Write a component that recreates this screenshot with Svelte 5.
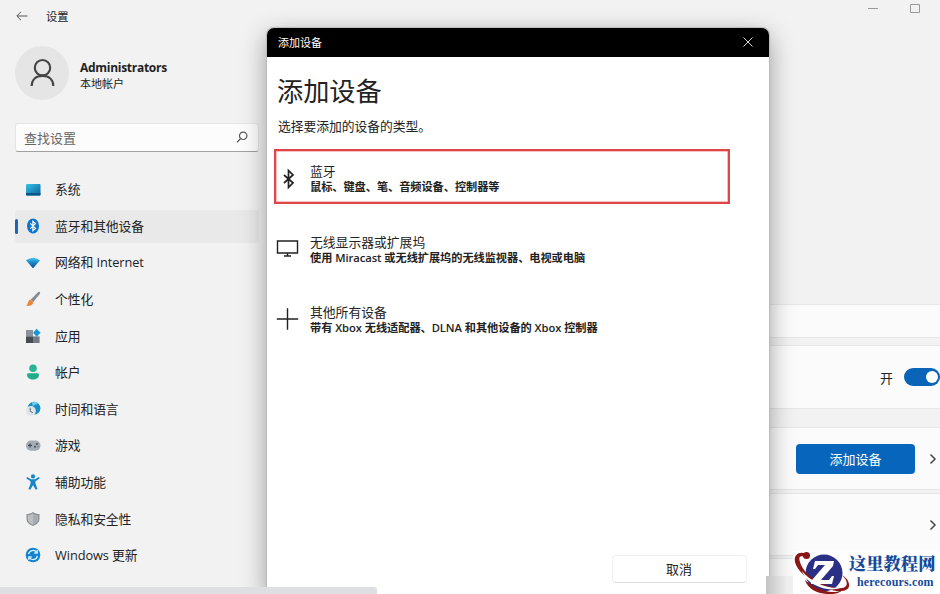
<script lang="ts">
    type NavItem = { icon: string; label: string };
    type Device = { icon: string; title: string; text: string };

    const nav: NavItem[] = [
        { icon: "system", label: "系统" },
        { icon: "bluetooth", label: "蓝牙和其他设备" },
        { icon: "network", label: "网络和 Internet" },
        { icon: "brush", label: "个性化" },
        { icon: "apps", label: "应用" },
        { icon: "account", label: "帐户" },
        { icon: "time", label: "时间和语言" },
        { icon: "gaming", label: "游戏" },
        { icon: "access", label: "辅助功能" },
        { icon: "privacy", label: "隐私和安全性" },
        { icon: "update", label: "Windows 更新" },
    ];

    const devices: Device[] = [
        { icon: "bluetooth", title: "蓝牙", text: "鼠标、键盘、笔、音频设备、控制器等" },
        {
            icon: "display",
            title: "无线显示器或扩展坞",
            text: "使用 Miracast 或无线扩展坞的无线监视器、电视或电脑",
        },
        {
            icon: "plus",
            title: "其他所有设备",
            text: "带有 Xbox 无线适配器、DLNA 和其他设备的 Xbox 控制器",
        },
    ];

    let selected = $state("bluetooth");
    let enabled = $state(true);
</script>

{#snippet navIcon(name: string)}
    <svg class="nav-icon" viewBox="0 0 16 16">
        {#if name === "system"}
            <defs>
                <linearGradient id="screen" x1="0" y1="0" x2="1" y2="1">
                    <stop offset="0" stop-color="#35c3e6" />
                    <stop offset="1" stop-color="#0b5f9c" />
                </linearGradient>
            </defs>
            <rect x="1" y="2" width="14.5" height="11.4" rx="1" fill="url(#screen)" />
            <path d="M1 11h14.5v1.4a1 1 0 0 1-1 1H2a1 1 0 0 1-1-1z" fill="#0b5685" />
        {:else if name === "bluetooth"}
            <ellipse cx="8" cy="8" rx="6" ry="7.4" fill="#0b74cf" />
            <path d="M5.3 5.4l5.2 5-2.6 2.3V3.3l2.6 2.3-5.2 5" fill="none" stroke="#fff" stroke-width="1.2" />
        {:else if name === "network"}
            <defs>
                <linearGradient id="wifi" x1="0" y1="0" x2="0" y2="1">
                    <stop offset="0" stop-color="#4cc8ef" />
                    <stop offset="0.45" stop-color="#1b8bcc" />
                    <stop offset="1" stop-color="#0c4f96" />
                </linearGradient>
            </defs>
            <path d="M1 5.2Q8 .2 15 5.2L8.6 12.800a.9.9 0 0 1-1.200 0z" fill="url(#wifi)" />
        {:else if name === "brush"}
            <path d="M14.7.9c.7.6.6 1.2.1 2L8.2 11 5.6 8.7 12.7 1.4c.7-.7 1.3-1 2-.5z" fill="#858b91" />
            <path d="M5.4 8.6L8.3 11c-.2 3-3.3 4.2-7 3.9 1.9-1.2 1.2-5.2 4.1-6.3z" fill="#e58a3c" />
        {:else if name === "apps"}
            <path d="M1 2h7v6.400H1z" fill="#8b9299" />
            <path d="M1 8.400h7V15H1z" fill="#454b51" />
            <path d="M8 8.400h6.600V15H8z" fill="#737a81" />
            <path d="M11.6.8l4 4-4 4-3.5-4z" fill="#1c94d6" />
        {:else if name === "account"}
            <circle cx="8" cy="4.2" r="3.8" fill="#27b593" />
            <path d="M2 10.6q0-1.4 1.4-1.4h9.2q1.4 0 1.4 1.4c0 3.4-2.6 5-6 5s-6-1.6-6-5z" fill="#20ac88" />
        {:else if name === "time"}
            <circle cx="9" cy="7.200" r="6.400" fill="#168fc7" />
            <path d="M7 1.2a6.4 6.4 0 0 1 6 .9c-1 2-4.1 1.6-5.3 3.5z" fill="#6dcdea" />
            <circle cx="5.8" cy="10" r="5" fill="#dfe5e9" />
            <path d="M5.2 6.8v3.5l2.6 1.3" fill="none" stroke="#5c6770" stroke-width="1" />
        {:else if name === "gaming"}
            <rect x="1" y="2.600" width="14.5" height="10.200" rx="5" fill="#a5acb3" />
            <path d="M3 7.4h4M5 5.4v4" stroke="#454e57" stroke-width="1.2" />
            <circle cx="12" cy="6" r="1" fill="#454e57" />
            <circle cx="10" cy="8.7" r="1" fill="#454e57" />
            <circle cx="13" cy="8.7" r=".7" fill="#6d7780" />
        {:else if name === "access"}
            <circle cx="8" cy="2.4" r="2.1" fill="#1686c9" />
            <path
                d="M2.2 2.9l3.9 2.3h3.8l3.9-2.3 1 1.3-4.3 3v2.6l2 5.2-1.7.7L8 11.3l-2.8 4.4-1.7-.7 2-5.2V7.2l-4.3-3z"
                fill="#1686c9"
            />
        {:else if name === "privacy"}
            <path d="M8 1c2 1.4 4 2 6.5 2v4.8c0 3.4-2.4 5.7-6.5 7.2-4.1-1.5-6.5-3.8-6.5-7.2V3C4 3 6 2.4 8 1z" fill="#898e93" />
            <path d="M8 2.4c1.6 1 3.3 1.6 5.3 1.700v3.800c0 2.500-1.800 4.400-5.300 5.800z" fill="#a8acb0" />
            <path d="M8 2.4C6.4 3.4 4.7 4 2.7 4.100v3.800c0 2.500 1.800 4.400 5.300 5.800z" fill="#bcbfc2" />
        {:else}
            <circle cx="8" cy="8" r="7.3" fill="#1382cf" />
            <path
                d="M3.6 7.2a4.5 4.5 0 0 1 8.2-1.7M12.4 8.8a4.5 4.5 0 0 1-8.2 1.7M12.2 3v3H9.3M3.8 13v-3h2.9"
                fill="none"
                stroke="#d9f1ff"
                stroke-width="1.3"
            />
        {/if}
    </svg>
{/snippet}

{#snippet deviceIcon(name: string)}
    <svg class="device-icon" viewBox="0 0 24 24">
        {#if name === "bluetooth"}
            <path d="M8 8l9 7.8-4.500 4.700v-17L17 8l-9 8" fill="none" stroke="#222" stroke-width="1.700" />
        {:else if name === "display"}
            <path d="M1.500 3h20v12H1.500zM11.500 15v3M8 18h7" fill="none" stroke="#222" stroke-width="1.400" />
        {:else}
            <path d="M.8 11h21.400M11.500.3v21.400" fill="none" stroke="#222" stroke-width="1.400" />
        {/if}
    </svg>
{/snippet}

{#snippet chevron()}
    <svg class="chevron" viewBox="0 0 8 12">
        <path d="M1.5 1.5L6 6l-4.5 4.5" fill="none" stroke="#484848" stroke-width="1.5" />
    </svg>
{/snippet}

<div class="window">
    <aside>
        <header>
            <svg class="back" viewBox="0 0 12 10">
                <path d="M11.5 5H1M5 .8L.8 5 5 9.2" fill="none" stroke="#555" />
            </svg>
            <span>设置</span>
        </header>

        <div class="profile">
            <div class="avatar">
                <svg viewBox="0 0 28 30">
                    <circle cx="14" cy="9.5" r="8" />
                    <path d="M2.8 28.500c0-7 4.700-10.500 11.200-10.500s11.200 3.500 11.200 10.500" />
                </svg>
            </div>
            <div class="who">
                <strong>Administrators</strong>
                <span>本地帐户</span>
            </div>
        </div>

        <div class="search">
            <span>查找设置</span>
            <svg viewBox="0 0 12 12">
                <circle cx="7.2" cy="4.8" r="3.7" />
                <path d="M4.6 7.5L1 11.3" />
            </svg>
        </div>

        <nav>
            {#each nav as item}
                <button class="nav-item" class:active={item.icon === selected} onclick={() => (selected = item.icon)}>
                    {@render navIcon(item.icon)}
                    <span>{item.label}</span>
                </button>
            {/each}
        </nav>
    </aside>

    <main>
        <div class="controls">
            <svg viewBox="0 0 10 10"><path d="M0 4.500h10" /></svg>
            <svg viewBox="0 0 10 10"><path d="M.5.5h9v8h-9z" /></svg>
        </div>
        <section class="card info"></section>
        <section class="card radio">
            <span>开</span>
            <button class="toggle" class:on={enabled} aria-label="蓝牙" onclick={() => (enabled = !enabled)}>
                <i></i>
            </button>
        </section>
        <section class="card add">
            <button class="primary">添加设备</button>
            {@render chevron()}
        </section>
        <section class="card more">
            {@render chevron()}
        </section>
        <section class="card rest"></section>
    </main>

    <div class="dialog">
        <div class="titlebar">
            <span>添加设备</span>
            <svg viewBox="0 0 10 10"><path d="M.5.5l9 9M9.5.5l-9 9" /></svg>
        </div>
        <div class="content">
            <h1>添加设备</h1>
            <p>选择要添加的设备的类型。</p>
            <div class="devices">
                {#each devices as device, i}
                    <div class="device" class:marked={i === 0}>
                        {@render deviceIcon(device.icon)}
                        <div>
                            <div class="device-title">{device.title}</div>
                            <div class="device-text">{device.text}</div>
                        </div>
                    </div>
                {/each}
            </div>
            <button class="cancel">取消</button>
        </div>
    </div>

    <div class="edge"></div>
    <div class="statusbar"></div>

    <div class="brand">
        <svg viewBox="0 0 58 43">
            <circle cx="31" cy="22" r="18.5" fill="#2b3087" />
            <path d="M12 29c7 6 17 11 26 12 6 .6 11-1 13-4-3 5-9 6.500-17 6-11-1-19-5-22-14z" fill="#8c1515" />
            <path
                d="M14 3C5-1-1 5 3 14c6 12 24 24 41 26 8 1 13-2 12-7-1-5-4-7-7-9 4 4 6 8 4 11-3 4-14 2-23-2C18 28 9 19 7 11 5 5 8 4 13 7z"
                fill="#8c1515"
            />
            <circle cx="13.5" cy="4.5" r="3.5" fill="#8c1515" />
            <path d="M9 20c8 10 24 18 38 17-8 3-17 1-25-3-6-3-11-8-13-14z" fill="#fff" />
            <path d="M22 10h19l-1 5-12 14h8l3-4h2l-2 8H18l1-4 13-15h-7l-3 4h-2z" fill="#fff" />
        </svg>
        <div class="brand-text">
            <b>这里教程网</b>
            <small>herecours.com</small>
        </div>
    </div>
</div>

<style>
    :global(body) {
        font-family: "Open Sans", "Noto Sans CJK SC", sans-serif;
        font-size: 13px;
        color: #222;
    }

    button {
        font: inherit;
        color: inherit;
        border: 0;
        padding: 0;
        background: none;
    }

    svg {
        display: block;
        flex: none;
    }

    .window {
        position: relative;
        display: grid;
        grid-template-columns: 267px 1fr;
        width: 940px;
        height: 594px;
        overflow: hidden;
        background: #f2f2f2;
    }

    aside {
        padding-left: 15px;
    }

    header {
        display: flex;
        align-items: center;
        gap: 18px;
        height: 32px;
        font-size: 11.3px;
    }

    .back {
        width: 12px;
        height: 10px;
        margin-left: 1px;
    }

    .profile {
        display: flex;
        align-items: center;
        gap: 11px;
        height: 54px;
        margin-top: 14px;
    }

    .avatar {
        display: grid;
        place-items: center;
        width: 54px;
        height: 54px;
        border-radius: 50%;
        background: #e5e5e5;
    }

    .avatar svg {
        width: 27px;
        height: 30px;
        fill: none;
        stroke: #444;
        stroke-width: 2.2;
    }

    .who {
        display: flex;
        flex-direction: column;
        padding-top: 3px;
        font-size: 11px;
        line-height: 15px;
    }

    .who strong {
        font-size: 12px;
        line-height: 17px;
        letter-spacing: -0.28px;
    }

    .search {
        display: flex;
        align-items: center;
        justify-content: space-between;
        box-sizing: border-box;
        width: 244px;
        height: 29px;
        margin-top: 23px;
        padding: 0 10px 1px 8px;
        border: 1px solid #e5e5e5;
        border-bottom-color: #a0a0a0;
        border-radius: 3px;
        background: #fcfcfc;
        color: #666;
    }

    .search svg {
        width: 12px;
        height: 12px;
        fill: none;
        stroke: #555;
        stroke-width: 1.2;
    }

    nav {
        display: flex;
        flex-direction: column;
        gap: 3.6px;
        margin-top: 21px;
    }

    .nav-item {
        position: relative;
        display: flex;
        align-items: center;
        gap: 14px;
        width: 244px;
        height: 33px;
        padding-left: 10px;
        border-radius: 3px;
        font-size: 12.8px;
        letter-spacing: -0.08px;
        text-align: left;
        white-space: nowrap;
    }

    .nav-item span {
        padding-bottom: 1.4px;
    }

    .nav-icon {
        width: 16px;
        height: 16px;
    }

    .active {
        background: #e9e9e9;
    }

    .active::before {
        content: "";
        position: absolute;
        left: 0;
        top: 9px;
        width: 2.5px;
        height: 15px;
        border-radius: 2px;
        background: #1b65b3;
    }

    main {
        display: flex;
        flex-direction: column;
    }

    .controls {
        display: flex;
        justify-content: flex-end;
        gap: 32px;
        height: 281px;
        padding: 4px 20px 0 0;
        margin-bottom: 19px;
    }

    .controls svg {
        width: 10px;
        height: 10px;
        fill: none;
        stroke: #999;
    }

    .card {
        display: flex;
        flex: none;
        align-items: center;
        justify-content: flex-end;
        box-sizing: border-box;
        border: solid #e6e6e6;
        border-width: 1px 0;
        background: #fbfbfb;
    }

    .info {
        height: 34px;
    }

    .radio {
        height: 64px;
        margin-top: 7px;
        gap: 11px;
    }

    .toggle {
        width: 36px;
        height: 18px;
        padding: 3px 2px;
        border-radius: 9px;
        background: #888;
    }

    .toggle i {
        display: block;
        width: 12px;
        height: 12px;
        border-radius: 50%;
        background: #fff;
    }

    .on {
        background: #0a64b7;
    }

    .on i {
        margin-left: auto;
    }

    .add {
        height: 63px;
        margin-top: 18px;
        gap: 14px;
    }

    .primary {
        width: 119px;
        height: 30px;
        padding-bottom: 1px;
        border-radius: 4px;
        background: #0766bb;
        color: #fff;
    }

    .chevron {
        width: 8px;
        height: 12px;
        margin-right: 3px;
    }

    .more {
        height: 63px;
        margin-top: 3px;
    }

    .rest {
        height: 40px;
        margin-top: 2px;
    }

    .dialog {
        position: absolute;
        left: 267px;
        top: 28px;
        display: flex;
        flex-direction: column;
        width: 501.5px;
        height: 566px;
        border-radius: 7px 7px 0 0;
        background: #fff;
        box-shadow:
            0 0 1px 1px #bbb,
            0 8px 26px rgba(0, 0, 0, 0.38);
    }

    .titlebar {
        display: flex;
        align-items: center;
        justify-content: space-between;
        box-sizing: border-box;
        height: 29px;
        padding: 0 16px 1px 11px;
        border-radius: 7px 7px 0 0;
        background: #000;
        color: #fff;
        font-size: 11px;
    }

    .titlebar svg {
        width: 10px;
        height: 10px;
        stroke: #ddd;
    }

    .content {
        display: flex;
        flex: 1;
        flex-direction: column;
        padding: 15px 22px 11px 7px;
    }

    h1 {
        margin: 0 0 0 3px;
        font-size: 26.2px;
        font-weight: 400;
        line-height: 38px;
    }

    p {
        margin: 6px 0 0 4px;
        font-size: 12.8px;
        line-height: 20px;
        letter-spacing: -0.05px;
    }

    .devices {
        display: flex;
        flex-direction: column;
        gap: 15.5px;
        margin-top: 13px;
    }

    .device {
        display: flex;
        align-items: center;
        gap: 9px;
        box-sizing: border-box;
        width: 456px;
        height: 55px;
        padding: 5px 0 0;
        border: 2px solid transparent;
        white-space: nowrap;
    }

    .marked {
        border-color: #e04648;
        box-shadow: inset 0 0 0 0.5px #e88;
    }

    .device-icon {
        width: 24px;
        height: 24px;
        margin-right: 1px;
    }

    .device-title {
        font-size: 12.8px;
        line-height: 16px;
    }

    .device-text {
        font-size: 11.2px;
        font-weight: 600;
        line-height: 16px;
        letter-spacing: -0.04px;
    }

    .cancel {
        width: 135px;
        height: 28px;
        margin: auto 0 0 auto;
        padding-bottom: 2px;
        border: 1px solid #f0f0f0;
        border-bottom-color: #dedede;
        border-radius: 4px;
    }

    .edge {
        position: absolute;
        left: 766px;
        top: 576px;
        width: 27px;
        height: 18px;
        background: linear-gradient(90deg, #c4c4c4, #eee 80%);
    }

    .statusbar {
        position: absolute;
        left: 0;
        bottom: 0;
        width: 377px;
        height: 7px;
        border-radius: 0 3px 0 0;
        background: #dedfe3;
    }

    .brand {
        position: absolute;
        right: 0;
        bottom: 0;
        display: flex;
        width: 147px;
        height: 43px;
        background: #fff;
    }

    .brand > svg {
        width: 58px;
        height: 43px;
    }

    .brand-text {
        display: flex;
        flex-direction: column;
        margin-left: -2px;
        padding-top: 1px;
        color: #174a9b;
        font-family: "Liberation Serif", "Noto Serif CJK SC", "Noto Sans CJK SC", serif;
        white-space: nowrap;
    }

    .brand-text b {
        font-size: 17.3px;
        font-weight: 900;
        line-height: 25px;
    }

    .brand-text small {
        margin-left: 8px;
        font-size: 12px;
        font-weight: 700;
        line-height: 11px;
        letter-spacing: 0.15px;
    }
</style>
